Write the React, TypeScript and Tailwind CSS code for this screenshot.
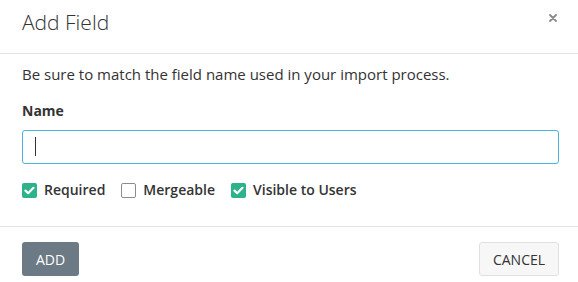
import { useState } from 'react'

function Check({ checked, onChange }: { checked: boolean; onChange: () => void }) {
  return (
    <button
      type="button"
      onClick={onChange}
      className={`size-[15px] shrink-0 flex items-center justify-center rounded-[2px] ${
        checked ? 'bg-[#2db38a]' : 'bg-white border border-[#8c8c8c]'
      }`}
    >
      {checked && (
        <svg width="11" height="9" viewBox="0 0 11 9" fill="none">
          <path d="M1.5 4.6 L4.2 7.2 L9.5 1.8" stroke="white" strokeWidth="2.2" strokeLinecap="round" strokeLinejoin="round" />
        </svg>
      )}
    </button>
  )
}

export default function App() {
  const [name, setName] = useState('')
  const [required, setRequired] = useState(true)
  const [mergeable, setMergeable] = useState(false)
  const [visible, setVisible] = useState(true)

  return (
    <div className="w-[578px] h-[282px] bg-white text-[#333] font-['Open_Sans',sans-serif] overflow-hidden">
      {/* Header */}
      <div className="h-[54px] flex items-start justify-between pl-[22px] pr-[21px] border-b border-[#e3e3e3]">
        <p className="mt-[7px] text-[21px] leading-[30px] font-light text-[#333]">Add Field</p>
        <button type="button" className="mt-[14px]">
          <svg width="8" height="8" viewBox="0 0 8 8">
            <path d="M1 1 L7 7 M7 1 L1 7" stroke="#8a8a8a" strokeWidth="1.8" strokeLinecap="round" />
          </svg>
        </button>
      </div>

      {/* Body */}
      <div className="h-[173px] pl-[22px] pr-[19px] pt-[10px] flex flex-col border-b border-[#e3e3e3]">
        <p className="text-[15px] leading-[20px]">
          Be sure to match the field name used in your import process.
        </p>
        <label className="mt-[17px] text-[14px] leading-[20px] font-bold">Name</label>
        <div className="relative mt-[9px]">
          <input
            value={name}
            onChange={(e) => setName(e.target.value)}
            className="h-[34px] w-full px-[12px] text-[14px] border border-[#4ab4dc] rounded-[3px] outline-none"
          />
          {name === '' && (
            <span className="absolute left-[13px] top-[7px] w-px h-[19px] bg-[#333] pointer-events-none" />
          )}
        </div>
        <div className="mt-[16px] flex items-center text-[14px] leading-[20px] font-semibold">
          <Check checked={required} onChange={() => setRequired(!required)} />
          <span className="ml-[7px]">Required</span>
          <span className="ml-[16px]">
            <Check checked={mergeable} onChange={() => setMergeable(!mergeable)} />
          </span>
          <span className="ml-[7px]">Mergeable</span>
          <span className="ml-[16px]">
            <Check checked={visible} onChange={() => setVisible(!visible)} />
          </span>
          <span className="ml-[7px]">Visible to Users</span>
        </div>
      </div>

      {/* Footer */}
      <div className="flex items-center justify-between pl-[22px] pr-[19px] pt-[15px]">
        <button
          type="button"
          className="h-[34px] w-[57px] rounded-[3px] bg-[#6c7a85] text-white text-[14px] uppercase"
        >
          Add
        </button>
        <button
          type="button"
          className="h-[34px] w-[80px] rounded-[3px] bg-[#f7f7f7] border border-[#e0e0e0] text-[#333] text-[14px] uppercase"
        >
          Cancel
        </button>
      </div>
    </div>
  )
}
